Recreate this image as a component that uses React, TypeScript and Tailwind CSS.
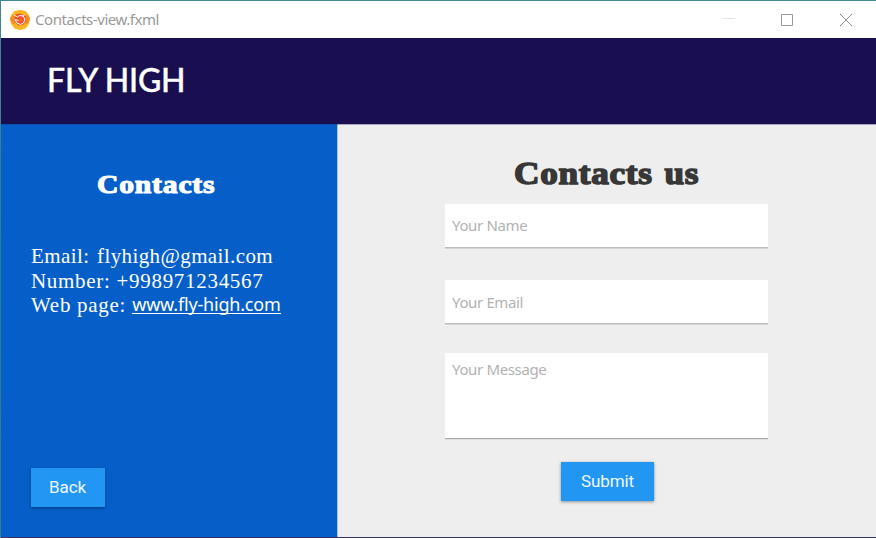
const displayFont = "font-['Liberation_Serif',serif] font-bold";
const uiFont = "font-['Noto_Sans','Open_Sans',sans-serif]";

function AppIcon() {
  return (
    <svg width="20" height="20" viewBox="0 0 20 20" aria-hidden="true">
      <path d="M4.500 1L10 0L15.500 1L18.500 4.500L20 9L18.500 14.500L15.500 18.500L10 20L4.500 18.500L1.500 14.500L0 9L1.500 4.500Z" fill="#fcb51c" />
      <path d="M0 8Q2 4 6 6L5 14Q1 15 0 8ZM20 8Q18 4 14 6L15 14Q19 15 20 8Z" fill="#f78d1e" />
      <path d="M5 4.500L10 3.500L15.500 5.500L16 11L13 15L8 15.500L4.500 11Z" fill="#f0522a" />
      <path d="M4 5L7.500 7L9.500 5.500L13 6L15 9L13.500 13L10.500 14.500L7 13L5 9.500L8.500 10.500M13 6L15 4.500" fill="none" stroke="#fff" strokeWidth="1" />
      <path d="M8.500 7.500L12 8L12.500 11L9.500 11.500Z" fill="#f5642f" />
    </svg>
  );
}

function TitleBar() {
  return (
    <div className="flex h-[37px] shrink-0 items-center bg-white pl-[9px] pr-6">
      <AppIcon />
      <span className={`mb-0.5 ml-[5px] flex-1 text-[15px] leading-5 tracking-[-0.45px] text-[#999] ${uiFont}`}>
        Contacts-view.fxml
      </span>
      <svg width="130" height="14" viewBox="0 0 130 14" fill="none" aria-hidden="true">
        <path d="M1 5.5H13" stroke="#e5e5e5" />
        <path d="M59.500 0.5H70.500V11.500H59.500Z" transform="translate(0 1)" stroke="#999" />
        <path d="M118 1L130 13M130 1L118 13" stroke="#909090" />
      </svg>
    </div>
  );
}

function Field({ placeholder, className }: { placeholder: string; className: string }) {
  return (
    <input
      placeholder={placeholder}
      className={`block h-11 w-[323px] border-b border-[#bcbcbc] bg-white px-[7px] text-[15px] tracking-[-0.36px] shadow-[0_1px_0_#d5d5d5] outline-none placeholder:text-[#b2b2b2] ${uiFont} ${className}`}
    />
  );
}

function ActionButton({ label, className }: { label: string; className: string }) {
  return (
    <button
      className={`bg-[#2196f3] font-['Roboto',sans-serif] text-[17px] leading-none tracking-[-0.1px] text-[#f0f8ff] shadow-[0_1px_3px_rgba(0,0,0,0.4)] ${className}`}
    >
      {label}
    </button>
  );
}

export default function App() {
  return (
    <div className="h-[538px] w-[876px] overflow-hidden bg-linear-to-b from-[#438696] via-[#23818a] to-[#377c8a] pl-px pt-px">
      <div className="flex h-[537px] flex-col border-b border-[#373266]">
        <TitleBar />
        <header className="flex h-[86px] shrink-0 items-center bg-[#190e4f] pb-[3px] pl-[46px]">
          <span className="font-['Lato',sans-serif] text-[32px] leading-10 font-medium tracking-[-0.2px] text-white [-webkit-text-stroke:0.4px_white]">
            FLY HIGH
          </span>
        </header>
        <main className="flex min-h-0 flex-1">
          <aside className="flex w-[337px] shrink-0 flex-col items-start border-t border-r border-t-[#084fae] border-r-[#a9c4e1] bg-[#065fc9] pl-[30px]">
            <h2 className={`mt-[44px] ml-[66px] origin-left scale-x-[1.14] text-[26px] leading-8 tracking-[0.7px] text-white [-webkit-text-stroke:1.1px_white] ${displayFont}`}>
              Contacts
            </h2>
            <div className="mt-[43px] font-['Liberation_Serif',serif] text-[21px] leading-[24.500px] whitespace-nowrap text-white">
              <p className="tracking-[0.4px] [word-spacing:2px]">Email: flyhigh@gmail.com</p>
              <p className="tracking-[0.7px]">Number: +998971234567</p>
              <p className="flex">
                <span className="tracking-[0.72px]">Web page:</span>
                <a className="ml-[6px] h-[21px] border-b border-white font-['Noto_Sans',sans-serif] text-[18px] leading-[22px] tracking-[-0.19px]">
                  www.fly-high.com
                </a>
              </p>
            </div>
            <ActionButton label="Back" className="mt-auto mb-[30px] h-[39px] w-[74px] pr-px" />
          </aside>
          <section className="flex flex-1 flex-col items-start border-t border-[#aaa6b9] bg-[#eee] pl-[107px]">
            <h1 className={`mt-[28px] mb-px ml-[69px] origin-left scale-x-[1.1] text-[32px] leading-10 tracking-[0.65px] text-[#373737] [-webkit-text-stroke:1.5px_#373737] [word-spacing:2px] ${displayFont}`}>
              Contacts us
            </h1>
            <div className="mt-[10px] flex flex-col gap-8">
              <Field placeholder="Your Name" className="pb-0.5" />
              <Field placeholder="Your Email" className="pb-0" />
            </div>
            <textarea
              placeholder="Your Message"
              className={`mt-[29px] block h-[86px] w-[323px] resize-none border-b border-[#aaa] bg-white px-[7px] py-[6px] text-[15px] leading-5 tracking-[-0.36px] shadow-[0_1px_0_#ddd] outline-none placeholder:text-[#b2b2b2] ${uiFont}`}
            />
            <ActionButton label="Submit" className="mt-[23px] ml-[116px] h-[39px] w-[93px]" />
          </section>
        </main>
      </div>
    </div>
  );
}
